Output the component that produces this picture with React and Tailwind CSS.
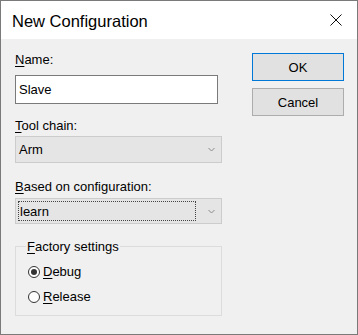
import { useState } from 'react'

function Label({ mnemonic, rest, className = '' }) {
  return (
    <div className={`h-[15px] leading-[15px] ${className}`}>
      <u className="underline-offset-[2px]">{mnemonic}</u>{rest}
    </div>
  )
}

function Chevron() {
  return (
    <svg width="7" height="5" viewBox="0 0 7 5" className="shrink-0">
      <path d="M0.5 1 L3.5 4 L6.5 1" fill="none" stroke="#8a8a8a" strokeWidth="1" />
    </svg>
  )
}

function Radio({ checked, mnemonic, rest, onClick }) {
  return (
    <div className="flex items-center h-[15px] cursor-default" onClick={onClick}>
      <span className="w-[12px] h-[12px] rounded-full border border-[#333] bg-white flex items-center justify-center">
        {checked && <span className="w-[6px] h-[6px] rounded-full bg-[#333]" />}
      </span>
      <span className="ml-[3px] leading-[15px]">
        <u className="underline-offset-[2px]">{mnemonic}</u>{rest}
      </span>
    </div>
  )
}

export default function App() {
  const [name, setName] = useState('Slave')
  const [mode, setMode] = useState('debug')

  return (
    <div className="w-[358px] h-[335px] border border-[#7a7a7a] bg-[#f0f0f0] flex flex-col font-['Liberation_Sans',Arial,sans-serif] text-[13px] text-black">
      {/* title bar */}
      <div className="h-[38px] bg-white flex items-center pl-[11px] pr-[14px] shrink-0">
        <span className="text-[16.5px] leading-[20px] mt-[1px]">New Configuration</span>
        <svg width="12" height="12" viewBox="0 0 12 12" className="ml-auto mr-[1px]">
          <path d="M0.5 0.5 L11.5 11.5 M11.5 0.5 L0.5 11.5" stroke="#111" strokeWidth="1" />
        </svg>
      </div>

      {/* body */}
      <div className="flex pl-[14px] pr-[13px]">
        <div className="w-[207px] flex flex-col">
          <Label mnemonic="N" rest="ame:" className="mt-[13px]" />
          <input
            value={name}
            onChange={e => setName(e.target.value)}
            className="mt-[8px] w-[203px] h-[29px] border border-[#7a7a7a] bg-white px-[3px] outline-none text-[13px]"
          />

          <Label mnemonic="T" rest="ool chain:" className="mt-[14px]" />
          <div className="mt-[3px] h-[27px] border border-[#cccccc] bg-[#e5e5e5] flex items-center pl-[3px] pr-[6px]">
            <span className="flex-1">Arm</span>
            <Chevron />
          </div>

          <Label mnemonic="B" rest="ased on configuration:" className="mt-[16px]" />
          <div className="mt-[4px] h-[26px] border border-[#cccccc] bg-[#e5e5e5] flex items-center pl-[2px] pr-[6px]">
            <div className="w-[178px] h-[20px] border border-dotted border-[#444] flex items-center pl-[1px] leading-[15px]">learn</div>
            <span className="flex-1" />
            <Chevron />
          </div>

          <fieldset className="mt-[15px] h-[77px] border border-[#dcdcdc] pl-[10px] pt-[10px]">
            <legend className="px-[1px] leading-[15px]">
              <u className="underline-offset-[2px]">F</u>actory settings
            </legend>
            <div className="flex flex-col gap-[10px] pl-[2px]">
              <Radio checked={mode === 'debug'} mnemonic="D" rest="ebug" onClick={() => setMode('debug')} />
              <Radio checked={mode === 'release'} mnemonic="R" rest="elease" onClick={() => setMode('release')} />
            </div>
          </fieldset>
        </div>

        <div className="ml-auto w-[92px] flex flex-col pt-[14px] gap-[7px]">
          <button className="h-[28px] border border-[#0078d7] bg-[#e1e1e1] leading-[15px]">OK</button>
          <button className="h-[28px] border border-[#adadad] bg-[#e1e1e1] leading-[15px]">Cancel</button>
        </div>
      </div>
    </div>
  )
}
